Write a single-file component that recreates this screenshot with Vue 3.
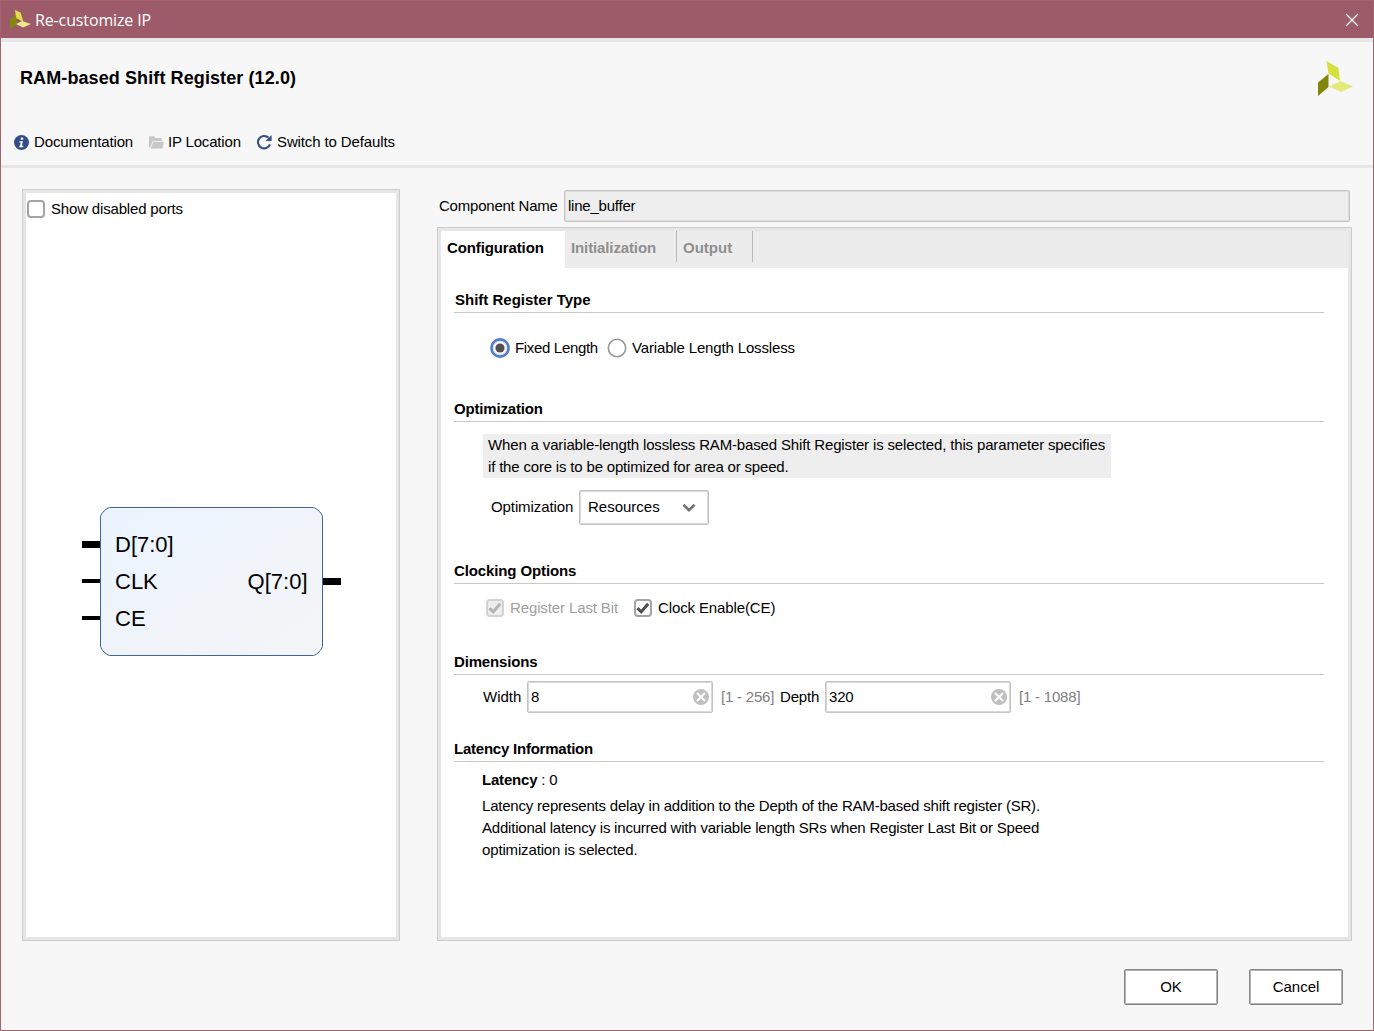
<template>
  <div class="window">
    <div class="titlebar">
      <svg class="title-logo" width="21" height="19" viewBox="0 0 21 19">
        <polygon points="5,0 10.5,2.5 13.5,12 6,8" fill="#dbe04a" />
        <polygon points="0,9 6,5.5 7,14 0,19" fill="#848a0c" />
        <polygon points="6,14 12,11 21,14 13,17.5" fill="#ebe98c" />
      </svg>
      <span class="title-text">Re-customize IP</span>
      <svg class="close" width="14" height="14" viewBox="0 0 14 14">
        <path d="M1 1L13 13M13 1L1 13" stroke="#fff" stroke-width="1.1" fill="none" />
      </svg>
    </div>

    <div class="header">
      <div class="header-top">
        <h1>RAM-based Shift Register (12.0)</h1>
        <svg class="logo" width="35" height="35" viewBox="0 0 35 35">
          <polygon points="8.5,0 20.5,7 22,20 10.5,12.5" fill="#d6e03a" />
          <polygon points="0,21.5 10.5,13 10.5,26 0,35" fill="#828509" />
          <polygon points="11,25.5 22.5,20 35,25.5 23,31" fill="#e3e97b" />
        </svg>
      </div>
      <div class="toolbar">
        <a class="tool doc">
          <svg width="15" height="15" viewBox="0 0 15 15">
            <circle cx="7.5" cy="7.5" r="7.5" fill="#344e85" />
            <rect x="6.7" y="2.4" width="2.6" height="2.3" rx="0.6" fill="#fff" />
            <path d="M5.4 6.2H8.9L8 10.8H9.3V12.2H5.3V10.8H6.1L6.7 7.5H5.4Z" fill="#fff" />
          </svg>
          <span>Documentation</span>
        </a>
        <a class="tool loc">
          <svg width="15" height="13" viewBox="0 0 15 13">
            <path d="M0 0.3H5.2L6.5 2H12.8V5H3.6L1.3 11.5H0Z" fill="#c8c8c8" />
            <path d="M4.2 5.8H15L13.4 12.5H1.8Z" fill="#c8c8c8" />
          </svg>
          <span>IP Location</span>
        </a>
        <a class="tool reset">
          <svg width="16" height="16" viewBox="0 0 16 16">
            <path d="M14 10.4A6.2 6.2 0 1 1 12.6 3.8" fill="none" stroke="#344e85" stroke-width="2.1" />
            <path d="M15.6 1V7H9.6Z" fill="#344e85" />
          </svg>
          <span>Switch to Defaults</span>
        </a>
      </div>
    </div>

    <div class="main">
      <div class="preview">
        <label class="ports">
          <span class="check"></span>
          <span class="t-ports">Show disabled ports</span>
        </label>
        <svg class="symbol" width="260" height="150" viewBox="0 0 260 150">
          <defs>
            <linearGradient id="block" x1="0" y1="0" x2="1" y2="1">
              <stop offset="0" stop-color="#eaf4fe" />
              <stop offset="0.3" stop-color="#eef4fd" />
              <stop offset="0.55" stop-color="#f0f4f9" />
              <stop offset="1" stop-color="#f4f5f7" />
            </linearGradient>
          </defs>
          <path
            d="M27.5 0.5H231.5Q234 1 237.5 4.5Q240 7 240.5 9.5V139.5Q240 142 237 145Q234 148 231.5 148.5H27.5Q25 148 22 145Q19 142 18.5 139.5V9.5Q19 7 22 4Q25 1 27.5 0.5Z"
            fill="url(#block)"
            stroke="#4264a0"
          />
          <rect
            v-for="pin in pins"
            :key="pin.name"
            :x="pin.side === 'in' ? 0 : 241"
            :y="pin.y - pin.bus / 2"
            width="18"
            :height="pin.bus"
          />
          <text
            v-for="pin in pins"
            :key="pin.name + '-label'"
            :x="pin.side === 'in' ? 33 : 225.5"
            :y="pin.base"
            :text-anchor="pin.side === 'in' ? 'start' : 'end'"
          >{{ pin.name }}</text>
        </svg>
      </div>

      <div class="settings">
        <div class="name-row">
          <span class="t-comp">Component Name</span>
          <div class="name-field">line_buffer</div>
        </div>

        <div class="tab-panel">
          <div class="tabs">
            <div
              v-for="tab in tabs"
              :key="tab"
              :class="['tab', tab.toLowerCase(), { active: tab === activeTab }]"
              @click="activeTab = tab"
            ><span>{{ tab }}</span></div>
          </div>

          <div class="content">
            <section class="type">
              <h2>Shift Register Type</h2>
              <div class="row radios">
                <svg width="20" height="20" viewBox="0 0 20 20">
                  <circle cx="10" cy="10" r="8.6" fill="#fff" stroke="#4f7bd0" stroke-width="2.6" />
                  <circle cx="10" cy="10" r="6.7" fill="none" stroke="#c9c9c9" stroke-width="0.8" />
                  <circle cx="10" cy="10" r="4.6" fill="#505050" />
                </svg>
                <span class="t-fixed">Fixed Length</span>
                <svg width="20" height="20" viewBox="0 0 20 20">
                  <circle cx="10" cy="10" r="8.7" fill="#fff" stroke="#999" stroke-width="1.6" />
                </svg>
                <span class="t-var">Variable Length Lossless</span>
              </div>
            </section>

            <section class="optimization">
              <h2>Optimization</h2>
              <div class="hint">
                <div class="hint1">When a variable-length lossless RAM-based Shift Register is selected, this parameter specifies</div>
                <div class="hint2">if the core is to be optimized for area or speed.</div>
              </div>
              <div class="row combo-row">
                <span class="t-opt">Optimization</span>
                <div class="combo">
                  <span>Resources</span>
                  <svg width="14" height="10" viewBox="0 0 14 10">
                    <path d="M1.5 1.8L7 7.2L12.5 1.8" fill="none" stroke="#737373" stroke-width="2.6" />
                  </svg>
                </div>
              </div>
            </section>

            <section class="clocking">
              <h2>Clocking Options</h2>
              <div class="row checks">
                <span class="check disabled">
                  <svg width="14" height="14" viewBox="0 0 14 14"><path d="M1.4 7.2L5.2 10.8L12.2 2.8" /></svg>
                </span>
                <span class="t-rlb">Register Last Bit</span>
                <span class="check">
                  <svg width="14" height="14" viewBox="0 0 14 14"><path d="M1.4 7.2L5.2 10.8L12.2 2.8" /></svg>
                </span>
                <span class="t-ce">Clock Enable(CE)</span>
              </div>
            </section>

            <section class="dimensions">
              <h2>Dimensions</h2>
              <div class="row dims">
                <template v-for="dim in dims" :key="dim.label">
                  <span class="dim-label" :class="dim.label.toLowerCase()">{{ dim.label }}</span>
                  <div class="field">
                    <span>{{ dim.value }}</span>
                    <svg width="16" height="16" viewBox="0 0 16 16">
                      <circle cx="8" cy="8" r="8" fill="#c0c0c0" />
                      <path d="M4 4L12 12M12 4L4 12" stroke="#fff" stroke-width="2.1" />
                    </svg>
                  </div>
                  <span class="range">{{ dim.range }}</span>
                </template>
              </div>
            </section>

            <section class="latency">
              <h2>Latency Information</h2>
              <div class="latency-value"><b>Latency</b> : 0</div>
              <div class="latency-text">
                <div>Latency represents delay in addition to the Depth of the RAM-based shift register (SR).</div>
                <div>Additional latency is incurred with variable length SRs when Register Last Bit or Speed</div>
                <div class="last">optimization is selected.</div>
              </div>
            </section>
          </div>
        </div>
      </div>
    </div>

    <div class="footer">
      <button>OK</button>
      <button>Cancel</button>
    </div>
  </div>
</template>

<script setup>
import { ref } from 'vue'

const tabs = ['Configuration', 'Initialization', 'Output']
const activeTab = ref('Configuration')

// bus = line thickness, base = text baseline
const pins = [
  { name: 'D[7:0]', side: 'in', y: 37.5, bus: 7, base: 45 },
  { name: 'CLK', side: 'in', y: 74, bus: 4, base: 82 },
  { name: 'CE', side: 'in', y: 111, bus: 4, base: 119 },
  { name: 'Q[7:0]', side: 'out', y: 74.5, bus: 7, base: 82 }
]

const dims = [
  { label: 'Width', value: '8', range: '[1 - 256]' },
  { label: 'Depth', value: '320', range: '[1 - 1088]' }
]
</script>

<style>
body {
  margin: 0;
}
</style>

<style scoped>
.window {
  box-sizing: border-box;
  width: 1374px;
  height: 1031px;
  border: 1px solid #a5626f;
  background: #f7f7f7;
  color: #000;
  font: 15px/22px "Liberation Sans", Arial, sans-serif;
  white-space: nowrap;
  overflow: hidden;
  display: flex;
  flex-direction: column;
}

.window * {
  box-sizing: border-box;
}

svg {
  display: block;
  flex: none;
}

.titlebar {
  height: 37px;
  background: #9d5b69;
  color: #fff;
  display: flex;
  align-items: center;
  padding: 0 14px 0 9px;
}

.title-logo {
  margin-top: -1px;
}

.title-text {
  flex: 1;
  margin-left: 4px;
  font-family: "Open Sans", "Noto Sans", sans-serif;
  font-size: 16px;
  letter-spacing: -0.13px;
}

.header {
  height: 130px;
  border-top: 4px solid #e7e7e7;
  border-bottom: 3px solid #e6e6e6;
}

.header-top {
  display: flex;
  justify-content: space-between;
  height: 89px;
  padding: 19px 20px 0 19px;
}

h1 {
  margin: 6px 0 0;
  font-size: 18px;
  line-height: 22px;
  letter-spacing: 0.1px;
}

.toolbar {
  display: flex;
  padding-left: 13px;
}

.tool {
  display: flex;
  align-items: center;
  gap: 5px;
}

.doc {
  width: 135px;
  letter-spacing: -0.14px;
}

.loc {
  width: 107px;
  gap: 4px;
  letter-spacing: -0.18px;
}

.reset {
  letter-spacing: -0.12px;
}

.main {
  height: 773px;
  display: flex;
  padding: 21px 21px 0 21px;
}

.preview {
  width: 378px;
  height: 752px;
  border: 1px solid #ccc;
  box-shadow: inset 0 0 0 3px #e6e6e6;
  background: #fff;
}

.ports {
  display: flex;
  align-items: center;
  gap: 6px;
  padding: 8px 0 0 4px;
  letter-spacing: -0.17px;
}

.check {
  width: 18px;
  height: 18px;
  flex: none;
  border: 2px solid #a3a3a3;
  border-radius: 4px;
  background: #fff;
}

.check svg path {
  fill: none;
  stroke: #505050;
  stroke-width: 3;
}

.check.disabled {
  border-color: #d2d2d2;
  background: #ededed;
}

.check.disabled path {
  stroke: #b4b4b4;
}

.symbol {
  margin: 287px 0 0 59px;
}

.symbol text {
  font-size: 22px;
}

.settings {
  margin-left: 37px;
  width: 915px;
  padding-top: 1px;
}

.name-row {
  display: flex;
  align-items: center;
  padding: 0 2px;
  letter-spacing: -0.22px;
}

.t-comp {
  width: 125px;
}

.name-field {
  flex: 1;
  height: 32px;
  padding: 4px 3px;
  border: 1px solid #c6c6c6;
  box-shadow: inset 0 0 0 1px #dcdcdc;
  border-radius: 2px;
  background: #eee;
}

.tab-panel {
  margin-top: 5px;
  height: 714px;
  padding: 3px;
  border: 1px solid #ccc;
  box-shadow: inset 0 0 0 3px #e6e6e6;
  background: #fff;
}

.tabs {
  display: flex;
  height: 37px;
  background: #ececec;
  font-weight: bold;
  color: #8f8f8f;
}

.tab {
  height: 31px;
  padding: 6px 0 0 6px;
  border-right: 1px solid #b8b8b8;
}

.tab.active {
  height: 37px;
  width: 124px;
  border: 0;
  background: #fff;
  color: #000;
}

.configuration,
.initialization {
  letter-spacing: -0.12px;
}

.initialization {
  width: 112px;
}

.output {
  width: 76px;
}

.content {
  padding: 21px 24px 0 13px;
}

h2 {
  margin: 0;
  height: 24px;
  border-bottom: 1px solid #c8c8c8;
  font-size: 15px;
  line-height: 22px;
  letter-spacing: -0.17px;
}

.type {
  height: 109px;
}

.type h2 {
  padding-left: 1px;
  letter-spacing: 0;
}

.optimization {
  height: 162px;
}

.clocking {
  height: 91px;
}

.clocking h2 {
  letter-spacing: -0.12px;
}

.dimensions {
  height: 87px;
}

.latency h2 {
  letter-spacing: -0.23px;
}

.row {
  display: flex;
  align-items: center;
}

.radios {
  padding: 24px 0 0 36px;
}

.t-fixed {
  width: 92px;
  margin-left: 5px;
  letter-spacing: -0.33px;
}

.t-var {
  margin-left: 5px;
  letter-spacing: -0.15px;
}

.hint {
  width: 628px;
  margin: 12px 0 12px 29px;
  padding-left: 5px;
  background: #eee;
}

.hint1 {
  letter-spacing: -0.15px;
}

.hint2 {
  letter-spacing: -0.18px;
}

.combo-row {
  padding-left: 37px;
}

.t-opt {
  width: 88px;
  margin-top: -1px;
  letter-spacing: -0.1px;
}

.combo {
  display: flex;
  align-items: center;
  justify-content: space-between;
  width: 130px;
  height: 35px;
  padding: 0 12px 0 8px;
  border: 1px solid #c4c4c4;
  box-shadow: inset 0 0 0 1px #d8d8d8;
  border-radius: 2px;
  background: #fff;
}

.combo span {
  margin-top: -1px;
}

.checks {
  padding: 13px 0 0 32px;
  letter-spacing: -0.12px;
}

.t-rlb {
  width: 124px;
  margin-left: 6px;
  color: #a0a0a0;
}

.t-ce {
  margin-left: 6px;
}

.dims {
  padding: 6px 0 0 29px;
}

.dim-label {
  width: 44px;
}

.dim-label.depth {
  width: 45px;
  letter-spacing: -0.2px;
}

.field {
  display: flex;
  align-items: center;
  justify-content: space-between;
  width: 186px;
  height: 32px;
  padding: 0 3px;
  border: 1px solid #c4c4c4;
  box-shadow: inset 0 0 0 1px #d8d8d8;
  border-radius: 2px;
  background: #fff;
  letter-spacing: -0.2px;
}

.range {
  width: 59px;
  margin-left: 8px;
  color: #808080;
  letter-spacing: -0.2px;
}

.latency-value {
  padding: 7px 0 4px 28px;
  letter-spacing: -0.2px;
}

.latency-text {
  padding-left: 28px;
  letter-spacing: -0.21px;
}

.latency-text .last {
  letter-spacing: -0.15px;
}

.footer {
  display: flex;
  justify-content: flex-end;
  gap: 31px;
  padding: 28px 30px 0 0;
}

button {
  width: 94px;
  height: 36px;
  padding: 0;
  border: 1px solid #858585;
  box-shadow: inset 0 0 0 1px #b4b4b4;
  border-radius: 2px;
  background: #fff;
  color: #000;
  font: inherit;
}
</style>
